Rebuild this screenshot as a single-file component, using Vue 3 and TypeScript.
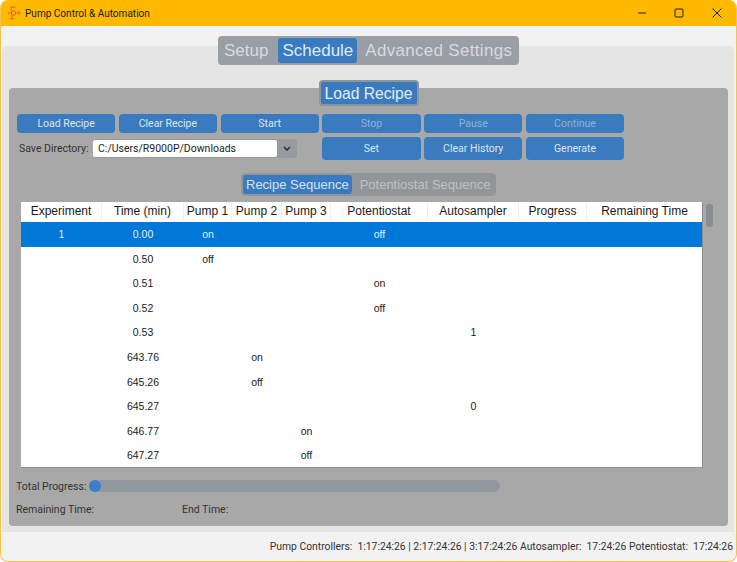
<script setup lang="ts">
interface Row {
  experiment?: string
  time: string
  pump1?: string
  pump2?: string
  pump3?: string
  potentiostat?: string
  autosampler?: string
}

const columns = ['Experiment', 'Time (min)', 'Pump 1', 'Pump 2', 'Pump 3', 'Potentiostat', 'Autosampler', 'Progress', 'Remaining Time']

const rows: Row[] = [
  { experiment: '1', time: '0.00', pump1: 'on', potentiostat: 'off' },
  { time: '0.50', pump1: 'off' },
  { time: '0.51', potentiostat: 'on' },
  { time: '0.52', potentiostat: 'off' },
  { time: '0.53', autosampler: '1' },
  { time: '643.76', pump2: 'on' },
  { time: '645.26', pump2: 'off' },
  { time: '645.27', autosampler: '0' },
  { time: '646.77', pump3: 'on' },
  { time: '647.27', pump3: 'off' },
]

const topButtons = [
  { label: 'Load Recipe', off: false },
  { label: 'Clear Recipe', off: false },
  { label: 'Start', off: false },
  { label: 'Stop', off: true },
  { label: 'Pause', off: true },
  { label: 'Continue', off: true },
]
</script>

<template>
  <div class="window">
    <header class="titlebar">
      <svg class="logo" width="16" height="16" viewBox="0 0 16 16" fill="none" stroke="#ea5a1f" stroke-width="1">
        <circle cx="7.5" cy="8" r="2.2" />
        <path d="M4 2.5c1.5-.8 4-.8 5.5.3M5.5 2.5c-.8 1.5-.3 2.8 1 3.6M3.5 13.5c1.5.5 3.5.5 5-.5M5 13.5c1-1 1.3-2 1-3.4M9.7 8h4.3M12.3 6.6L14.5 8l-2.2 1.4M1.5 8h3.8" />
      </svg>
      <span class="title">Pump Control &amp; Automation</span>
      <div class="controls">
        <svg width="10" height="10" viewBox="0 0 10 10"><path d="M2 5h8" stroke="#1a1a1a" /></svg>
        <svg width="10" height="10" viewBox="0 0 10 10" fill="none"><rect x="1" y="1" width="8" height="8" rx="1" stroke="#1a1a1a" /></svg>
        <svg width="10" height="10" viewBox="0 0 10 10"><path d="M0.5 0.5l9 9M9.5 0.5l-9 9" stroke="#1a1a1a" /></svg>
      </div>
    </header>

    <main class="main">
      <nav class="tabs">
        <span class="tab">Setup</span>
        <span class="tab active">Schedule</span>
        <span class="tab wide">Advanced Settings</span>
      </nav>

      <section class="outer">
        <button class="load-main">Load Recipe</button>

        <div class="inner">
          <div class="actions">
            <button v-for="b in topButtons" :key="b.label" class="btn short" :class="{ off: b.off }">{{ b.label }}</button>
            <div class="save-dir">
              <span class="save-label">Save Directory:</span>
              <div class="combo">
                <span class="combo-value">C:/Users/R9000P/Downloads</span>
                <span class="combo-arrow">
                  <svg width="8" height="5" viewBox="0 0 8 5" fill="none"><path d="M1 1l3 3 3-3" stroke="#222" stroke-width="1.4" /></svg>
                </span>
              </div>
            </div>
            <button class="btn tall">Set</button>
            <button class="btn tall">Clear History</button>
            <button class="btn tall">Generate</button>
          </div>

          <div class="subtabs">
            <span class="subtab active">Recipe Sequence</span>
            <span class="subtab">Potentiostat Sequence</span>
          </div>

          <div class="table-wrap">
            <div class="table">
              <div class="thead">
                <div v-for="c in columns" :key="c" class="th">{{ c }}</div>
              </div>
              <div v-for="(r, i) in rows" :key="r.time" class="tr" :class="{ selected: i === 0 }">
                <div>{{ r.experiment }}</div>
                <div>{{ r.time }}</div>
                <div>{{ r.pump1 }}</div>
                <div>{{ r.pump2 }}</div>
                <div>{{ r.pump3 }}</div>
                <div>{{ r.potentiostat }}</div>
                <div>{{ r.autosampler }}</div>
                <div></div>
                <div></div>
              </div>
            </div>
            <div class="scroll-thumb"></div>
          </div>

          <div class="progress">
            <span class="progress-label">Total Progress:</span>
            <div class="track"><span class="thumb"></span></div>
          </div>

          <div class="times">
            <span class="remaining">Remaining Time:</span>
            <span>End Time:</span>
          </div>
        </div>
      </section>
    </main>

    <footer class="status">Pump Controllers:&nbsp; 1:17:24:26 | 2:17:24:26 | 3:17:24:26 Autosampler:&nbsp; 17:24:26 Potentiostat:&nbsp; 17:24:26</footer>
  </div>
</template>

<style>
html,
body {
  margin: 0;
  background: #fff;
}
</style>

<style scoped>
.window {
  box-sizing: border-box;
  width: 737px;
  height: 562px;
  display: flex;
  flex-direction: column;
  background: #f2f2f2;
  border: 1px solid #f3c54e;
  border-top: 0;
  border-radius: 8px;
  overflow: hidden;
  font-family: Roboto, "Liberation Sans", sans-serif;
}

.titlebar {
  height: 26px;
  flex: none;
  margin: 0 -1px;
  display: flex;
  align-items: center;
  background: #ffba00;
  color: #1a1a1a;
  font-size: 10.05px;
}

.logo {
  margin-left: 6px;
}

.title {
  margin-left: 3px;
}

.controls {
  margin-left: auto;
  margin-right: 15px;
  display: flex;
  gap: 28px;
}

.main {
  flex: 1;
  padding: 10px 2px 0 1px;
  display: flex;
  flex-direction: column;
}

.tabs {
  position: relative;
  z-index: 1;
  align-self: center;
  box-sizing: border-box;
  width: 301px;
  height: 29px;
  margin-left: 1px;
  margin-bottom: -19px;
  padding: 2px 6px;
  display: flex;
  align-items: stretch;
  gap: 8px;
  background: #9a9ea5;
  border-radius: 4px;
  font: 17px "Liberation Sans", sans-serif;
  color: #d8dadd;
  white-space: nowrap;
}

.tab {
  display: flex;
  align-items: center;
  border-radius: 3px;
}

.tab.active {
  margin-left: 2px;
  padding: 0 4px;
  background: #3a7bbf;
  color: #dfe9f5;
}

.tab.wide {
  letter-spacing: 0.3px;
}

.outer {
  height: 486px;
  display: flex;
  flex-direction: column;
  background: #e5e5e5;
  border-radius: 6px 6px 0 0;
  padding: 34px 6px 0 7px;
  box-sizing: border-box;
}

.load-main {
  position: relative;
  z-index: 1;
  align-self: center;
  box-sizing: border-box;
  width: 100px;
  height: 26px;
  margin-bottom: -18px;
  padding: 1px 0 0;
  background: #3a7bbf;
  border: 2px solid #8d949c;
  border-radius: 4px;
  color: #e4edf7;
  font: 15.7px "Liberation Sans", sans-serif;
}

.inner {
  height: 438px;
  box-sizing: border-box;
  padding: 26px 8px 0;
  background: #a8a8a8;
  border-radius: 4px;
  color: #333;
}

.actions {
  display: grid;
  grid-template-columns: repeat(6, 98.2px);
  grid-template-rows: 19px 23px;
  gap: 4px 3.6px;
}

.btn {
  padding: 0;
  border: 0;
  border-radius: 4px;
  background: #3a7bbf;
  color: #dbe6f2;
  font: 10.5px Roboto, sans-serif;
}

.btn.off {
  color: #8fb1d6;
}

.save-dir {
  grid-column: span 3;
  display: flex;
  align-items: center;
  height: 19px;
  margin-top: 2px;
  font-size: 10.5px;
}

.save-label {
  width: 76px;
  flex: none;
  padding-left: 2px;
  box-sizing: border-box;
}

.combo {
  display: flex;
  width: 204px;
  height: 19px;
  background: #979ba0;
  border-radius: 3px;
}

.combo-value {
  box-sizing: border-box;
  width: 184px;
  height: 17px;
  margin-top: 1px;
  padding-left: 5px;
  line-height: 17px;
  background: #fff;
  border-radius: 2px;
  color: #222;
}

.combo-arrow {
  flex: 1;
  display: flex;
  align-items: center;
  justify-content: center;
}

.subtabs {
  box-sizing: border-box;
  width: 255px;
  height: 23px;
  margin: 13px 0 6px 224px;
  padding: 2px;
  display: flex;
  gap: 8px;
  background: #939699;
  border-radius: 4px;
  font: 13px "Liberation Sans", sans-serif;
  color: #bfc0c2;
}

.subtab {
  display: flex;
  align-items: center;
  border-radius: 3px;
  white-space: nowrap;
}

.subtab.active {
  padding: 0 3px;
  background: #3a7bbf;
  color: #d5e2f1;
}

.table-wrap {
  display: flex;
  align-items: flex-start;
  margin-left: 4px;
}

.table {
  box-sizing: border-box;
  width: 682px;
  height: 266px;
  background: #fff;
  border-right: 1px solid #8e8e8e;
  border-bottom: 1px solid #8e8e8e;
  color: #1a1a1a;
  font-family: "Liberation Sans", sans-serif;
}

.thead,
.tr {
  display: grid;
  grid-template-columns: 81px 82px 48px 50px 49px 97px 91px 68px 115px;
  text-align: center;
}

.thead {
  height: 20px;
  font-size: 12px;
}

.th {
  height: 19px;
  line-height: 19px;
  border-right: 1px solid #f0f0f0;
  white-space: nowrap;
}

.th:last-child {
  border-right: 0;
}

.tr {
  height: 24.6px;
  line-height: 24.6px;
  font-size: 10.5px;
}

.tr.selected {
  background: #0078d7;
  color: #e6f1fb;
}

.scroll-thumb {
  width: 7px;
  height: 23px;
  margin: 2px 0 0 3px;
  background: #8a8d91;
  border-radius: 3px;
}

.progress {
  display: flex;
  align-items: center;
  height: 12px;
  margin-top: 12px;
  font-size: 10.5px;
}

.progress-label {
  width: 73px;
  flex: none;
  margin-left: -1px;
  white-space: nowrap;
}

.track {
  width: 411px;
  height: 12px;
  display: flex;
  align-items: center;
  background: #8f979f;
  border-radius: 6px;
}

.thumb {
  width: 12px;
  height: 12px;
  background: #3a7fcc;
  border-radius: 50%;
}

.times {
  display: flex;
  margin: 11px 0 0 -1px;
  font-size: 10.5px;
}

.remaining {
  width: 166px;
}

.status {
  flex: none;
  height: 28px;
  line-height: 27px;
  padding-right: 3px;
  text-align: right;
  font-size: 10.35px;
  color: #333;
  white-space: nowrap;
}
</style>
